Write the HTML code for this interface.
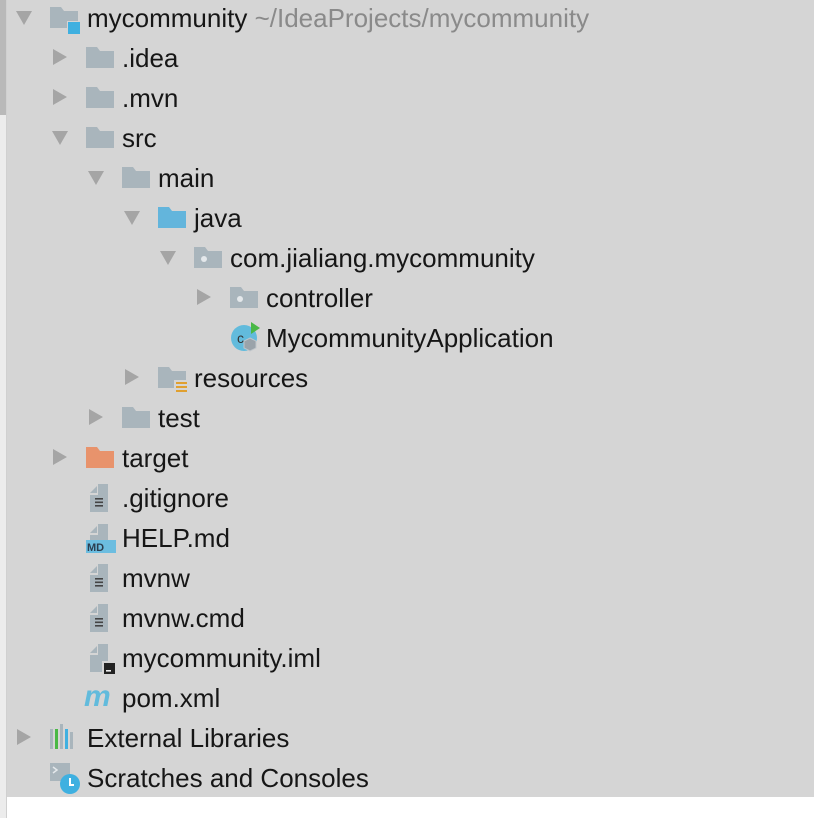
<!DOCTYPE html>
<html><head><style>
body{margin:0;width:814px;height:818px;background:#fff;position:relative;overflow:hidden;font-family:"Liberation Sans",sans-serif}
#panel{position:absolute;left:7px;top:0;width:807px;height:797px;background:#d5d5d5}
#strip{position:absolute;left:0;top:0;width:6px;height:818px;background:#ececec;border-right:1px solid #d0d0d0}
#sb{position:absolute;left:0;top:0;width:6px;height:115px;background:#b9b9b9}
.r{position:absolute;height:40px;line-height:40px;font-size:26px;color:#161616;white-space:nowrap;margin-top:1px}
.a{position:absolute;width:0;height:0}
.ar{border-top:8px solid transparent;border-bottom:8px solid transparent;border-left:14px solid #a5a5a5}
.ad{border-left:8px solid transparent;border-right:8px solid transparent;border-top:14px solid #a5a5a5}
.ic{position:absolute}
</style></head><body>
<div id="panel"></div><div id="strip"></div><div id="sb"></div>
<svg width="0" height="0" style="position:absolute">
<defs>
<symbol id="fold" viewBox="0 0 28 24"><path d="M0 2h11l3 4h14v17H0z" fill="#a9b5bc"/></symbol>
<symbol id="pkg" viewBox="0 0 28 24"><path d="M0 2h11l3 4h14v17H0z" fill="#a9b5bc"/><circle cx="10" cy="14" r="3" fill="#e4e8eb"/></symbol>
<symbol id="file" viewBox="0 0 22 28"><path d="M10 0h10v28H2V11h8z" fill="#a9b5bc"/><path d="M2 9L9 2v7z" fill="#a9b5bc"/><rect x="7" y="14" width="8" height="1.6" fill="#444"/><rect x="7" y="17.5" width="8" height="1.6" fill="#444"/><rect x="7" y="21" width="8" height="1.6" fill="#444"/></symbol>
</defs></svg>

<div class="a ad" style="left:16px;top:11px"></div>
<svg class="ic" style="left:50px;top:5px" width="30" height="30" viewBox="0 0 30 30"><path d="M0 2h11l3 4h14v17H0z" fill="#a9b5bc"/><rect x="17" y="16" width="13" height="13" fill="#d5d5d5"/><rect x="18" y="17" width="12" height="12" fill="#3fb0e0"/></svg>
<div class="r" style="left:87px;top:-3px">mycommunity <span style="color:#8a8a8a">~/IdeaProjects/mycommunity</span></div>

<div class="a ar" style="left:53px;top:49px"></div>
<svg class="ic" style="left:86px;top:45px" width="28" height="24"><use href="#fold"/></svg>
<div class="r" style="left:122px;top:37px">.idea</div>

<div class="a ar" style="left:53px;top:89px"></div>
<svg class="ic" style="left:86px;top:85px" width="28" height="24"><use href="#fold"/></svg>
<div class="r" style="left:122px;top:77px">.mvn</div>

<div class="a ad" style="left:52px;top:131px"></div>
<svg class="ic" style="left:86px;top:125px" width="28" height="24"><use href="#fold"/></svg>
<div class="r" style="left:122px;top:117px">src</div>

<div class="a ad" style="left:88px;top:171px"></div>
<svg class="ic" style="left:122px;top:165px" width="28" height="24"><use href="#fold"/></svg>
<div class="r" style="left:158px;top:157px">main</div>

<div class="a ad" style="left:124px;top:211px"></div>
<svg class="ic" style="left:158px;top:205px" width="28" height="24" viewBox="0 0 28 24"><path d="M0 2h11l3 4h14v17H0z" fill="#63b5dc"/></svg>
<div class="r" style="left:194px;top:197px">java</div>

<div class="a ad" style="left:160px;top:251px"></div>
<svg class="ic" style="left:194px;top:245px" width="28" height="24"><use href="#pkg"/></svg>
<div class="r" style="left:230px;top:237px">com.jialiang.mycommunity</div>

<div class="a ar" style="left:197px;top:289px"></div>
<svg class="ic" style="left:230px;top:285px" width="28" height="24"><use href="#pkg"/></svg>
<div class="r" style="left:266px;top:277px">controller</div>

<svg class="ic" style="left:230px;top:322px" width="32" height="32" viewBox="0 0 32 32"><circle cx="14" cy="16" r="13" fill="#62bbdc"/><text x="7" y="21" font-size="14" font-family="Liberation Sans" fill="#333">c</text><path d="M21 0l9 6-9 6z" fill="#49b845"/><path d="M20 16l6 3v7l-6 3-6-3v-7z" fill="#9aa3aa" stroke="#c0c6cb"/></svg>
<div class="r" style="left:266px;top:317px">MycommunityApplication</div>

<div class="a ar" style="left:125px;top:369px"></div>
<svg class="ic" style="left:158px;top:365px" width="32" height="30" viewBox="0 0 32 30"><path d="M0 2h11l3 4h14v17H0z" fill="#a9b5bc"/><rect x="16" y="15" width="14" height="14" fill="#d5d5d5"/><rect x="18" y="17" width="11" height="2" fill="#e0a030"/><rect x="18" y="21" width="11" height="2" fill="#e0a030"/><rect x="18" y="25" width="11" height="2" fill="#e0a030"/></svg>
<div class="r" style="left:194px;top:357px">resources</div>

<div class="a ar" style="left:89px;top:409px"></div>
<svg class="ic" style="left:122px;top:405px" width="28" height="24"><use href="#fold"/></svg>
<div class="r" style="left:158px;top:397px">test</div>

<div class="a ar" style="left:53px;top:449px"></div>
<svg class="ic" style="left:86px;top:445px" width="28" height="24" viewBox="0 0 28 24"><path d="M0 2h11l3 4h14v17H0z" fill="#e8936c"/></svg>
<div class="r" style="left:122px;top:437px">target</div>

<svg class="ic" style="left:88px;top:484px" width="22" height="28"><use href="#file"/></svg>
<div class="r" style="left:122px;top:477px">.gitignore</div>

<svg class="ic" style="left:86px;top:524px" width="30" height="30" viewBox="0 0 30 30"><path d="M12 0h10v18H4V11h8z" fill="#a9b5bc"/><path d="M4 9L11 2v7z" fill="#a9b5bc"/><rect x="0" y="16" width="30" height="13" fill="#6cbde0"/><text x="1" y="27" font-size="11" font-weight="bold" font-family="Liberation Sans" fill="#2c3e50">MD</text></svg>
<div class="r" style="left:122px;top:517px">HELP.md</div>

<svg class="ic" style="left:88px;top:564px" width="22" height="28"><use href="#file"/></svg>
<div class="r" style="left:122px;top:557px">mvnw</div>

<svg class="ic" style="left:88px;top:604px" width="22" height="28"><use href="#file"/></svg>
<div class="r" style="left:122px;top:597px">mvnw.cmd</div>

<svg class="ic" style="left:88px;top:644px" width="30" height="30" viewBox="0 0 30 30"><path d="M10 0h10v28H2V11h8z" fill="#a9b5bc"/><path d="M2 9L9 2v7z" fill="#a9b5bc"/><rect x="14" y="17" width="13" height="13" fill="#d5d5d5"/><rect x="16" y="19" width="11" height="11" fill="#222"/><rect x="18" y="26" width="5" height="1.6" fill="#eee"/></svg>
<div class="r" style="left:122px;top:637px">mycommunity.iml</div>

<div class="r" style="left:84px;top:676px;color:#62bbdc;font-style:italic;font-weight:bold;font-size:30px">m</div>
<div class="r" style="left:122px;top:677px">pom.xml</div>

<div class="a ar" style="left:17px;top:729px"></div>
<svg class="ic" style="left:50px;top:724px" width="30" height="26"><rect x="0" y="5" width="3" height="20" fill="#a9b5bc"/><rect x="5" y="5" width="3" height="20" fill="#49b845"/><rect x="10" y="0" width="3" height="25" fill="#a9b5bc"/><rect x="15" y="5" width="3" height="20" fill="#3fb0e0"/><rect x="20" y="8" width="3" height="17" fill="#a9b5bc"/></svg>
<div class="r" style="left:87px;top:717px">External Libraries</div>

<svg class="ic" style="left:50px;top:763px" width="32" height="32" viewBox="0 0 32 32"><rect x="0" y="0" width="20" height="18" fill="#a9b5bc"/><path d="M3 4l4 3-4 3" stroke="#e4e8eb" fill="none" stroke-width="1.5"/><circle cx="20" cy="21" r="10" fill="#3fb0e0"/><path d="M20 15v7h4" stroke="#fff" stroke-width="2" fill="none"/></svg>
<div class="r" style="left:87px;top:757px">Scratches and Consoles</div>
</body></html>
